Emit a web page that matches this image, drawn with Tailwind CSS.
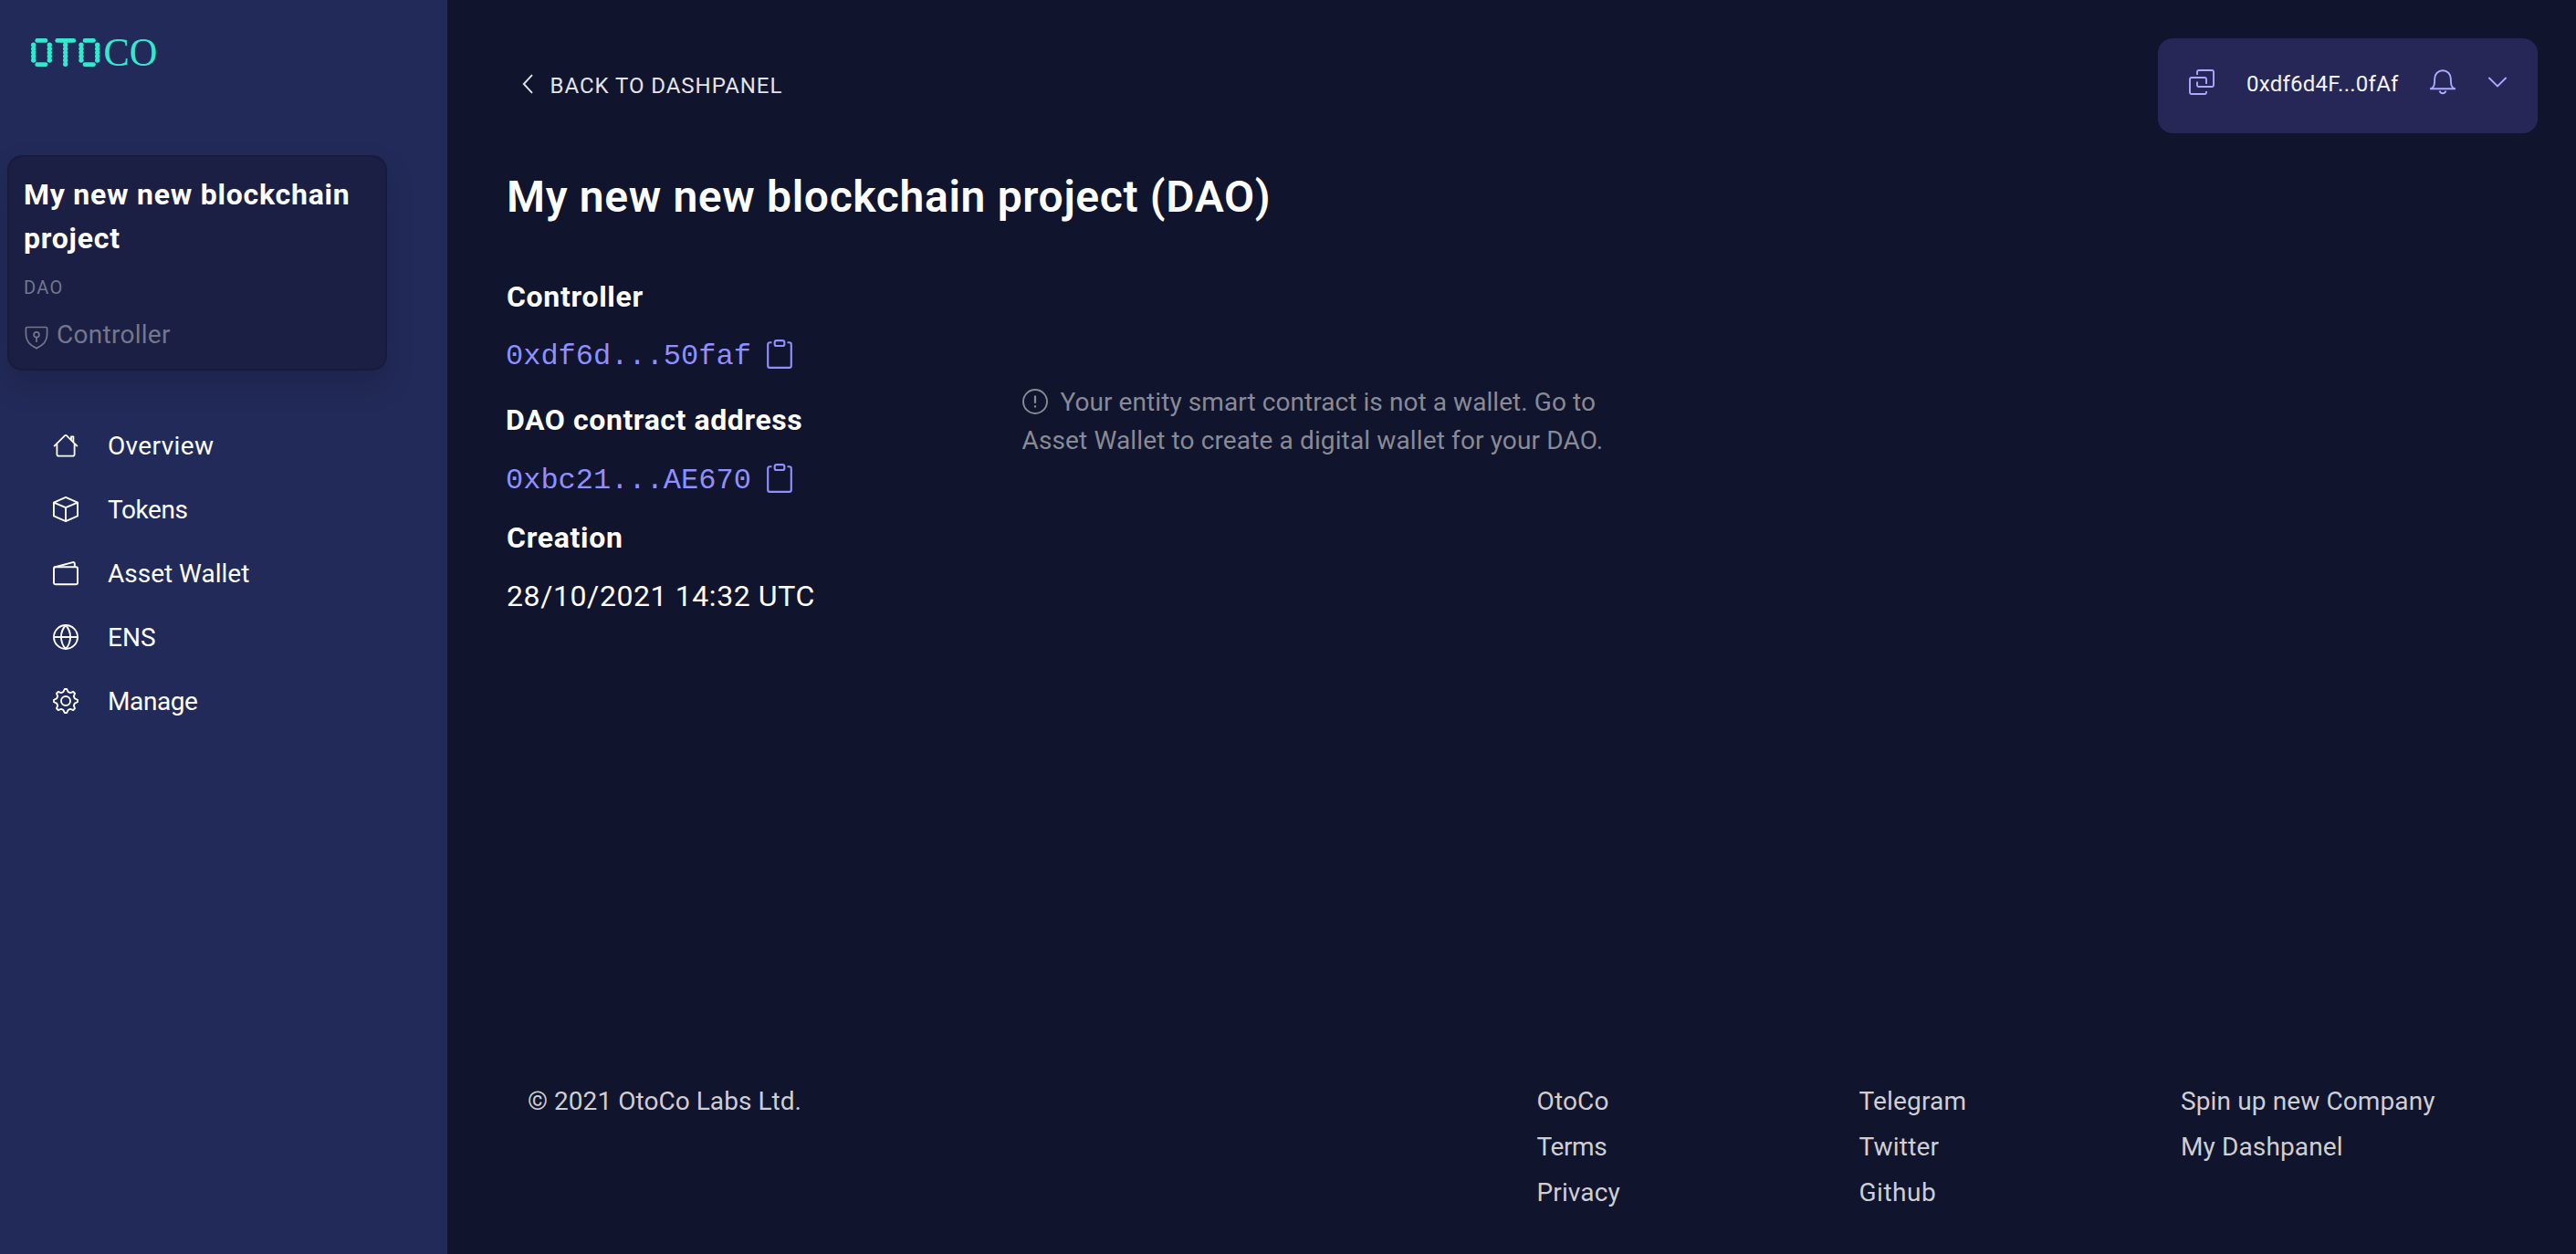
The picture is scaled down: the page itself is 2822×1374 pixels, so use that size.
<!DOCTYPE html>
<html lang="en">
<head>
<meta charset="utf-8">
<title>OtoCo Dashpanel</title>
<script src="https://cdn.jsdelivr.net/npm/@tailwindcss/browser@4"></script>
</head>
<body class="flex h-[1374px] w-[2822px] overflow-hidden bg-[#10142c] font-['Roboto',sans-serif] text-[28px] text-white">

<!-- Sidebar -->
<aside class="flex w-[490px] shrink-0 flex-col bg-[#222a59]">
  <svg class="mt-[26px] ml-[30px] h-[64px] w-[150px] shrink-0 overflow-visible" viewBox="30 26 150 64" fill="none" stroke="#34e8d0" stroke-width="4.8" stroke-linecap="round">
    <path d="M40.7 44.4h9.3M40.7 70.7h9.3M93 44.4h9.5M93 70.7h9.5M62.7 44.4h18"/>
    <path stroke-width="5.4" stroke-dasharray="0 4.2" d="M36.7 49.2v17M54.3 49.2v17M71.7 45v25.4M89 49.2v17M106.7 49.2v17"/>
    <text x="113.5" y="72.4" textLength="58.9" lengthAdjust="spacingAndGlyphs" font-family="Liberation Serif, serif" font-size="45" fill="#34e8d0" stroke="none">CO</text>
  </svg>

  <div class="mt-[80px] ml-2 h-[236px] w-[416px] shrink-0 rounded-2xl border-2 border-[#171c3e] bg-[#1a1f43] pt-[17px] pl-4 shadow-[0_16px_32px_rgba(0,0,0,0.15)]">
    <h2 class="text-[32px] leading-[48px] font-bold tracking-[0.76px]">My new new blockchain<br>project</h2>
    <p class="mt-[15px] text-[20px] leading-[30px] tracking-[1.3px] text-[#74778c]">DAO</p>
    <p class="mt-[16px] flex items-center text-[28px] leading-[42px] tracking-[0.28px] text-[#74778c]">
      <svg class="mt-[5px] mr-[9px] ml-[1px] size-[26px]" viewBox="0 0 26 26" fill="none" stroke="currentColor" stroke-width="1.7" stroke-linejoin="round"><path d="M3 1.5h20a1.6 1.6 0 0 1 1.6 1.6v6.4c0 6.500-4.600 12-11.600 15.100C6 21.500 1.400 16 1.400 9.500V3.100A1.600 1.600 0 0 1 3 1.500z"/><circle cx="13" cy="9.800" r="2.900"/><path d="M13 12.700v5.300"/></svg>Controller
    </p>
  </div>

  <nav class="mt-[48px] flex flex-col pl-[58px] text-[28px]">
    <a class="flex h-[70px] items-center gap-[32px] tracking-[0.36px]"><svg class="size-[28px] -translate-y-px" viewBox="0 0 28 28" fill="none" stroke="currentColor" stroke-width="1.8" stroke-linecap="round" stroke-linejoin="round"><path d="M1.600 14.600 13.200 3.200a1.200 1.200 0 0 1 1.600 0L26.400 14.600M4.400 12.400v11.400a1.900 1.900 0 0 0 1.900 1.900h15.400a1.900 1.900 0 0 0 1.900-1.900V12.400M20 7.800V4.300h2.400v6"/></svg>Overview</a>
    <a class="flex h-[70px] items-center gap-[32px] tracking-[-0.4px]"><svg class="size-[28px] -translate-y-px" viewBox="0 0 15 15" fill="none" stroke="currentColor" stroke-linejoin="round"><path d="M7.500 14.500l-7-3v-8l7-3 7 3v8l-7 3zM7.500 14.500v-8M.5 3.500l7 3 7-3"/></svg>Tokens</a>
    <a class="flex h-[70px] items-center gap-[32px]"><svg class="size-[28px] -translate-y-px" viewBox="0 0 28 28" fill="none" stroke="currentColor" stroke-width="1.900" stroke-linecap="round" stroke-linejoin="round"><rect x="1" y="7.300" width="26" height="19" rx="1.800"/><path d="M1.600 7.500 21.800 2.100a1.600 1.600 0 0 1 2 1.500v3.500"/></svg>Asset Wallet</a>
    <a class="flex h-[70px] items-center gap-[32px]"><svg class="size-[28px] -translate-y-px" viewBox="0 0 28 28" fill="none" stroke="currentColor" stroke-width="1.900"><circle cx="14" cy="14" r="13"/><path d="M1 14h26M14 1c-6.700 7.300-6.700 18.700 0 26M14 1c6.700 7.300 6.700 18.700 0 26"/></svg>ENS</a>
    <a class="flex h-[70px] items-center gap-[32px] tracking-[-0.4px]"><svg class="size-[28px] -translate-y-px" viewBox="-14 -14 28 28" fill="none" stroke="currentColor" stroke-width="1.900" stroke-linejoin="round"><circle r="5"/><path d="M-1.250-12.940h2.500L2.640-9.850 5.100-8.830 8.270-10.030 10.030-8.270 8.830-5.100 9.850-2.640 12.940-1.250v2.500L9.850 2.640 8.830 5.100 10.030 8.270 8.270 10.030 5.100 8.830 2.640 9.850 1.250 12.940h-2.500L-2.640 9.850-5.100 8.830-8.270 10.030-10.030 8.270-8.830 5.100-9.850 2.640-12.940 1.250v-2.500L-9.850-2.640-8.830-5.100-10.030-8.270-8.270-10.030-5.100-8.830-2.640-9.850z"/></svg>Manage</a>
  </nav>
</aside>

<main class="flex min-w-0 flex-1 flex-col pl-[64px]">
  <!-- Top bar -->
  <header class="mt-[42px] flex h-[104px] shrink-0 items-start justify-between pr-[42px]">
    <a class="mt-[34px] ml-[18px] flex h-[36px] items-center text-[24px] leading-[36px] tracking-[0.96px] text-[#e3e4e8]">
      <svg class="mr-[18.500px] h-[22px] w-[12px] -translate-y-[2px]" viewBox="0 0 12 22" fill="none" stroke="currentColor" stroke-width="1.900"><path d="M11 1.200 1.800 11 11 20.800"/></svg>BACK TO DASHPANEL
    </a>
    <div class="flex h-[104px] w-[416px] items-center rounded-2xl bg-[#262757] pb-[8px] pl-[34px] text-[#a9a9ff]">
      <svg class="size-[28px]" viewBox="0 0 28 28" fill="none" stroke="currentColor" stroke-width="1.900"><path d="M9 6V2.800A1.800 1.800 0 0 1 10.800 1h14.400A1.800 1.800 0 0 1 27 2.800v14.400a1.800 1.800 0 0 1-1.800 1.800H10.800A1.800 1.800 0 0 1 9 17.200V13.500"/><path d="M19 16V10.800A1.800 1.800 0 0 0 17.200 9H2.800A1.800 1.800 0 0 0 1 10.800v14.400A1.800 1.800 0 0 0 2.800 27h14.400a1.800 1.800 0 0 0 1.800-1.800V24"/></svg>
      <span class="mt-[4px] ml-[35px] w-[201px] text-[24px] leading-[36px] tracking-[0.25px] text-[#f4f5fa]">0xdf6d4F...0fAf</span>
      <svg class="size-[28px]" viewBox="0 0 28 28" fill="none" stroke="currentColor" stroke-width="1.900"><path d="M0 21.200h28M1.300 21.200C3.700 20 4.800 18 5 14.500l.2-4.500a8.800 8.800 0 0 1 17.600 0l.2 4.500c.2 3.500 1.300 5.500 3.700 6.700M10.600 23.600a3.500 3.500 0 0 0 6.800 0"/></svg>
      <svg class="ml-[35px] h-[14px] w-[22px]" viewBox="0 0 22 14" fill="none" stroke="currentColor" stroke-width="1.900"><path d="M1.400 2 11 11.500 20.600 2"/></svg>
    </div>
  </header>

  <h1 class="mt-[41px] ml-[1px] text-[48px] leading-[58px] font-semibold tracking-[0.66px]">My new new blockchain project (DAO)</h1>

  <section class="mt-[56px] grid grid-cols-[565.500px_1fr]">
    <div class="text-[32px] leading-[48px]">
      <h3 class="ml-[1px] font-bold tracking-[0.68px]">Controller</h3>
      <p class="mt-[18px] flex text-[#8f8fff]"><span class="w-[284px] font-['Liberation_Mono',monospace]">0xdf6d...50faf</span>
        <svg class="mt-[5px] size-[32px]" viewBox="0 0 15 15" fill="none" stroke="currentColor"><path d="M3.500 1.500h-1a1 1 0 0 0-1 1v11a1 1 0 0 0 1 1h10a1 1 0 0 0 1-1v-11a1 1 0 0 0-1-1h-1"/><rect x="5" y=".5" width="5" height="2.800" rx="1"/></svg></p>
      <h3 class="mt-[21px] font-bold tracking-[0.58px]">DAO contract address</h3>
      <p class="mt-[19px] flex text-[#8f8fff]"><span class="w-[284px] font-['Liberation_Mono',monospace]">0xbc21...AE670</span>
        <svg class="mt-[5px] size-[32px]" viewBox="0 0 15 15" fill="none" stroke="currentColor"><path d="M3.500 1.500h-1a1 1 0 0 0-1 1v11a1 1 0 0 0 1 1h10a1 1 0 0 0 1-1v-11a1 1 0 0 0-1-1h-1"/><rect x="5" y=".5" width="5" height="2.800" rx="1"/></svg></p>
      <h3 class="mt-[14px] ml-[1px] font-bold tracking-[0.7px]">Creation</h3>
      <p class="mt-[16px] ml-[1px] tracking-[0.59px]">28/10/2021 14:32 UTC</p>
    </div>
    <div class="mt-[119px] leading-[42px] text-[#888a96]">
      <div class="flex items-center tracking-[0.07px]"><svg class="mr-[14px] size-[28px] -translate-y-px" viewBox="0 0 28 28" fill="none" stroke="currentColor" stroke-width="1.900"><circle cx="14" cy="14" r="13"/><path stroke-width="2.200" d="M14 7.500v8.200M14 18.200v2.400"/></svg>Your entity smart contract is not a wallet. Go to</div>
      <div class="tracking-[0.13px]">Asset Wallet to create a digital wallet for your DAO.</div>
    </div>
  </section>

  <!-- Footer -->
  <footer class="mt-auto mb-[42px] grid grid-cols-[1105.500px_353px_352.500px_1fr] pl-[24px] leading-[50px] text-[#ceced3]">
    <div class="tracking-[0.05px]">© 2021 OtoCo Labs Ltd.</div>
    <ul><li class="tracking-[0.16px]">OtoCo</li><li class="tracking-[-0.4px]">Terms</li><li class="tracking-[0.13px]">Privacy</li></ul>
    <ul class="tracking-[0.18px]"><li>Telegram</li><li>Twitter</li><li class="tracking-[0.5px]">Github</li></ul>
    <ul class="tracking-[0.12px]"><li>Spin up new Company</li><li>My Dashpanel</li></ul>
  </footer>
</main>
</body>
</html>
